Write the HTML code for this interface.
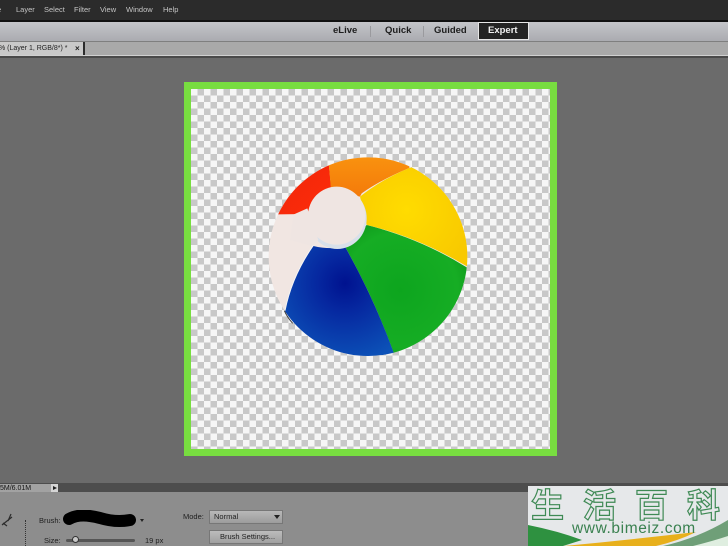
<!DOCTYPE html>
<html>
<head>
<meta charset="utf-8">
<style>
html,body{margin:0;padding:0;background:#6b6b6b}
#r{position:relative;width:728px;height:546px;overflow:hidden;font-family:"Liberation Sans","Noto Sans CJK SC",sans-serif;background:#6b6b6b;filter:blur(.35px)}
.a{position:absolute;white-space:nowrap}
.m{top:5px;font-size:7.5px;color:#c4c4c4;line-height:10px}
.t{top:25px;font-size:9.5px;font-weight:bold;color:#1e1e1e;line-height:12px}
.l{font-size:7.5px;color:#1f1f1f;line-height:10px}
#chk{left:191px;top:89px;width:359px;height:360px;background:repeating-conic-gradient(#c8c8c8 0 25%,#f6f6f6 0 50%) 0 0/13px 13px}
</style>
</head>
<body>
<div id="r">
<div class="a" style="left:0;top:0;width:728px;height:20px;background:#2b2b2b"></div>
<div class="a" style="left:0;top:20px;width:728px;height:2px;background:#111"></div>
<div class="a m" style="left:-3px">e</div>
<div class="a m" style="left:16px">Layer</div>
<div class="a m" style="left:44px">Select</div>
<div class="a m" style="left:74px">Filter</div>
<div class="a m" style="left:100px">View</div>
<div class="a m" style="left:126px">Window</div>
<div class="a m" style="left:163px">Help</div>

<div class="a" style="left:0;top:22px;width:728px;height:19px;background:linear-gradient(#c4c5c9,#aaabb0)"></div>
<div class="a" style="left:0;top:41px;width:728px;height:1px;background:#7f7f7f"></div>
<div class="a t" style="left:333px">eLive</div>
<div class="a" style="left:370px;top:26px;width:1px;height:11px;background:#9a9a9e"></div>
<div class="a t" style="left:385px">Quick</div>
<div class="a" style="left:423px;top:26px;width:1px;height:11px;background:#9a9a9e"></div>
<div class="a t" style="left:434px">Guided</div>
<div class="a" style="left:478px;top:22px;width:51px;height:18px;background:#232323;border:1px solid #e6e6e6;box-sizing:border-box"></div>
<div class="a t" style="left:488px;color:#f0f0f0">Expert</div>

<div class="a" style="left:0;top:42px;width:728px;height:13px;background:#a9a9a9"></div>
<div class="a" style="left:0;top:42px;width:84px;height:14px;background:#c9c9c9"></div>
<div class="a" style="left:83px;top:42px;width:2px;height:15px;background:#2c2c2c"></div>
<div class="a" style="left:0;top:55px;width:728px;height:1px;background:#d0d0d0"></div>
<div class="a" style="left:0;top:56px;width:728px;height:2px;background:#4a4a4a"></div>
<div class="a" style="left:-1px;top:44px;font-size:7px;line-height:10px;color:#222">% (Layer 1, RGB/8*) *</div>
<div class="a" style="left:75px;top:44px;font-size:8px;line-height:10px;color:#222;font-weight:bold">×</div>

<div class="a" style="left:184px;top:82px;width:373px;height:374px;background:#78dd40"></div>
<div class="a" id="chk"></div>

<svg class="a" style="left:250px;top:140px" width="240" height="230" viewBox="0 0 720 690">
<defs>
<clipPath id="c"><circle cx="354" cy="350" r="298"/></clipPath>
<radialGradient id="gy" gradientUnits="userSpaceOnUse" cx="470" cy="210" r="210"><stop offset="0" stop-color="#ffdc00"/><stop offset="1" stop-color="#f8c900"/></radialGradient>
<radialGradient id="gg" gradientUnits="userSpaceOnUse" cx="450" cy="450" r="230"><stop offset="0" stop-color="#0da51e"/><stop offset=".75" stop-color="#16ad24"/><stop offset="1" stop-color="#0f9a1c"/></radialGradient>
<radialGradient id="gb" gradientUnits="userSpaceOnUse" cx="285" cy="430" r="240"><stop offset="0" stop-color="#00128f"/><stop offset=".35" stop-color="#0628a0"/><stop offset="1" stop-color="#0c52b8"/></radialGradient>
<linearGradient id="go" x1="0" y1="0" x2="0" y2="1"><stop offset="0" stop-color="#fb9a10"/><stop offset="1" stop-color="#f47a0a"/></linearGradient>
<linearGradient id="gr" x1="0" y1="0" x2="1" y2="1"><stop offset="0" stop-color="#e8280e"/><stop offset="1" stop-color="#ff2a08"/></linearGradient>
</defs>
<g clip-path="url(#c)">
<rect x="0" y="0" width="720" height="690" fill="#f1e6e2"/>
<path d="M30 224L170 222L245 160L237 78L220 10L30 10Z" fill="url(#gr)"/>
<path d="M237 78L243 150L330 170L335 160Q395 118 478 84L480 10L220 10Z" fill="url(#go)"/>
<path d="M478 84L560 60L690 300L653 380Q500 290 350 255L330 170Q395 118 478 84Z" fill="url(#gy)"/>
<path d="M350 255Q510 295 650 382L720 400L720 690L430 690L430 636Q370 470 285 320Z" fill="url(#gg)"/>
<path d="M190 318Q240 330 285 320Q370 470 432 640L430 690L60 690L60 600L105 512Q125 410 190 318Z" fill="url(#gb)"/>
<path d="M105 512Q125 410 190 316" fill="none" stroke="#f4f4f4" stroke-width="3"/>
<ellipse cx="262" cy="235" rx="88" ry="92" fill="#d8e0ea"/>
<ellipse cx="260" cy="227" rx="86" ry="87" fill="#efe5e2"/>
<path d="M172 205L205 300L185 318L120 300L130 224Z" fill="#efe5e2"/>
</g>
<path d="M103 512Q112 532 128 550" fill="none" stroke="#3a3a3a" stroke-width="3"/>
</svg>

<div class="a" style="left:0;top:483px;width:728px;height:9px;background:#4d4d4d"></div>
<div class="a" style="left:0;top:492px;width:728px;height:54px;background:#8d8d8d"></div>
<div class="a" style="left:0;top:484px;width:51px;height:8px;background:#a2a2a2"></div>
<div class="a" style="left:51px;top:484px;width:7px;height:8px;background:#d5d5d5"></div>
<div class="a" style="left:53px;top:485.5px;width:0;height:0;border-left:4px solid #222;border-top:2.5px solid transparent;border-bottom:2.5px solid transparent"></div>
<div class="a" style="left:0;top:483.5px;font-size:7px;line-height:9px;color:#111">5M/6.01M</div>

<svg class="a" style="left:0;top:510px" width="20" height="20" viewBox="0 0 20 20"><path d="M2 15L12 7M3 13L7 16M11 4L8 11" stroke="#2c2c2c" stroke-width="1.2" fill="none"/></svg>
<div class="a" style="left:25px;top:520px;width:0;height:26px;border-left:1px dotted #333"></div>
<div class="a l" style="left:39px;top:516px">Brush:</div>
<svg class="a" style="left:60px;top:510px" width="90" height="20" viewBox="0 0 90 20"><path d="M9 9C18 4 28 5 40 8C50 11 60 12 70 10" stroke="#000" stroke-width="12" stroke-linecap="round" fill="none"/></svg>
<div class="a" style="left:140px;top:519px;width:0;height:0;border-top:3px solid #222;border-left:2.5px solid transparent;border-right:2.5px solid transparent"></div>
<div class="a l" style="left:44px;top:536px">Size:</div>
<div class="a" style="left:66px;top:539px;width:69px;height:3px;background:#555;border-radius:2px"></div>
<div class="a" style="left:72px;top:536px;width:7px;height:7px;border-radius:50%;background:#c8c8c8;border:1px solid #333;box-sizing:border-box"></div>
<div class="a l" style="left:145px;top:536px">19 px</div>

<div class="a l" style="left:183px;top:512px">Mode:</div>
<div class="a" style="left:209px;top:510px;width:74px;height:14px;background:linear-gradient(#b8b8b8,#9c9c9c);border:1px solid #777;box-sizing:border-box"></div>
<div class="a l" style="left:214px;top:512px">Normal</div>
<div class="a" style="left:274px;top:515px;width:0;height:0;border-top:4px solid #222;border-left:3px solid transparent;border-right:3px solid transparent"></div>
<div class="a" style="left:209px;top:530px;width:74px;height:14px;background:linear-gradient(#bcbcbc,#a0a0a0);border:1px solid #777;box-sizing:border-box"></div>
<div class="a l" style="left:220px;top:532px">Brush Settings...</div>

<div class="a" style="left:528px;top:486px;width:200px;height:60px;background:#e6e8ea;overflow:hidden">
<svg class="a" style="left:0;top:0" width="200" height="60" viewBox="0 0 200 60">
<path d="M0 39Q30 45 54 54L35 60L0 60Z" fill="#2e9140"/>
<path d="M36 60Q100 54 168 46Q150 55 128 60Z" fill="#e8b01c"/>
<path d="M135 60Q170 52 200 34L200 60Z" fill="#6f9f78"/>
<path d="M165 60Q185 55 200 50L200 60Z" fill="#dfeee0"/>
</svg>
<div class="a" style="left:3px;top:-5px;font-size:33px;line-height:44px;color:transparent;-webkit-text-stroke:1.2px #3f8a55;letter-spacing:19px;font-weight:bold;font-family:'Noto Sans CJK SC',sans-serif">生活百科</div>
<div class="a" style="left:44px;top:33px;font-size:15.5px;line-height:20px;color:#3a8150;letter-spacing:.6px">www.bimeiz.com</div>
</div>
</div>
</body>
</html>
